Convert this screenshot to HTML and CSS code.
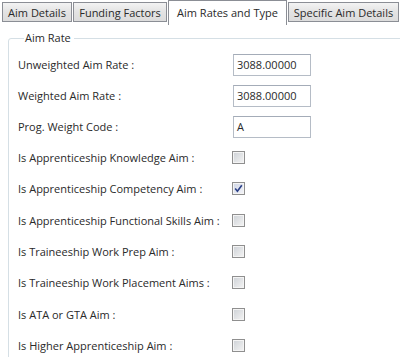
FILE: index.html
```html
<!DOCTYPE html>
<html>
<head>
<meta charset="utf-8">
<link rel="stylesheet" href="styles.css">
</head>
<body>
<div class="tabs">
  <div class="tab t1">Aim Details</div>
  <div class="tab t2">Funding Factors</div>
  <div class="tab t3 selected">Aim Rates and Type</div>
  <div class="tab t4">Specific Aim Details</div>
</div>
<div class="panel">
  <fieldset class="group">
    <legend>Aim Rate</legend>
    <div class="row"><span class="label">Unweighted Aim Rate :</span><span class="textbox">3088.00000</span></div>
    <div class="row"><span class="label">Weighted Aim Rate :</span><span class="textbox">3088.00000</span></div>
    <div class="row"><span class="label">Prog. Weight Code :</span><span class="textbox">A</span></div>
    <div class="row crow"><span class="label">Is Apprenticeship Knowledge Aim :</span><span class="check"></span></div>
    <div class="row crow"><span class="label">Is Apprenticeship Competency Aim :</span><span class="check checked"><svg viewBox="0 0 9 9" width="9" height="9"><path d="M1.2 4.6 L3.4 7.2 L7.8 1.2" fill="none" stroke="#2a3f86" stroke-width="1.6"/></svg></span></div>
    <div class="row crow"><span class="label">Is Apprenticeship Functional Skills Aim :</span><span class="check"></span></div>
    <div class="row crow"><span class="label">Is Traineeship Work Prep Aim :</span><span class="check"></span></div>
    <div class="row crow"><span class="label">Is Traineeship Work Placement Aims :</span><span class="check"></span></div>
    <div class="row crow"><span class="label">Is ATA or GTA Aim :</span><span class="check"></span></div>
    <div class="row crow"><span class="label">Is Higher Apprenticeship Aim :</span><span class="check"></span></div>
  </fieldset>
</div>
</body>
</html>
```
FILE: styles.css
```css
html, body {
  margin: 0;
  padding: 0;
  background: #fff;
  overflow: hidden;
}
body {
  width: 400px;
  height: 357px;
  font-family: "Open Sans", "Noto Sans", sans-serif;
  font-size: 11px;
  color: #2a2a2a;
}
.tabs {
  display: flex;
  align-items: flex-start;
  height: 25px;
  padding-left: 2px;
}
.tab {
  box-sizing: border-box;
  height: 20px;
  margin-top: 2px;
  border: 1px solid #8b8e95;
  background: linear-gradient(#f3f3f3, #e3e3e3 50%, #dcdcdc);
  display: flex;
  align-items: center;
  justify-content: center;
  white-space: nowrap;
  margin-right: 1px;
}
.t1 { width: 70px; }
.t2 { width: 94px; }
.t3 { width: 119px; }
.t4 { width: 111px; }
.tab.selected {
  height: 25px;
  margin-top: 0;
  background: #fff;
  border-bottom: none;
  border-color: #8b8e95;
  padding-bottom: 2px;
}
.panel {
  padding: 0 0 0 8px;
}
.group {
  margin: 6px -12px 0 0;
  padding: 4px 0 0 9px;
  border: 1px solid #d5dfe5;
  border-radius: 3px;
  min-inline-size: 0;
}
.group legend {
  padding: 0 3px 0 1px;
  margin-left: 6px;
  line-height: 14px;
}
.row {
  display: flex;
  align-items: center;
  height: 31px;
}
.crow {
  height: 31.33px;
}
.label {
  width: 215px;
  flex: none;
  white-space: nowrap;
}
.textbox {
  box-sizing: border-box;
  width: 78px;
  height: 22px;
  border: 1px solid #b5bcc6;
  border-top-color: #a4acb8;
  padding-left: 3px;
  display: flex;
  align-items: center;
}
.check {
  box-sizing: border-box;
  width: 13px;
  height: 13px;
  margin-left: -1px;
  border: 1px solid #8f8f8f;
  background: linear-gradient(135deg, #cdd1d6, #f4f4f4);
  box-shadow: inset 0 0 0 1px #f4f4f4;
  display: flex;
  align-items: center;
  justify-content: center;
}
.check.checked {
  background: linear-gradient(135deg, #cfd6e6, #f4f4f8);
}
```
